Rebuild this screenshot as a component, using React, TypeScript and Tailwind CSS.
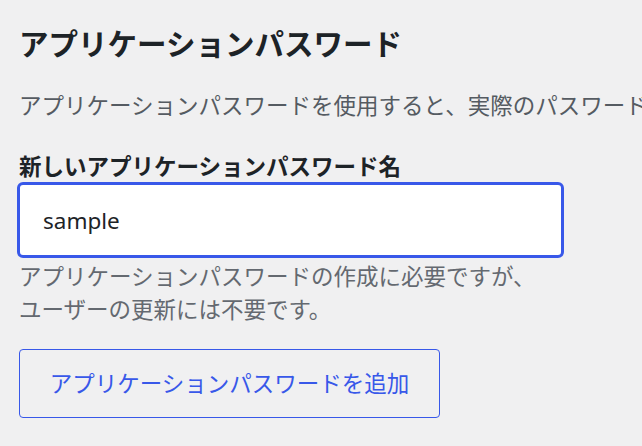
import React from 'react';

const font = { fontFamily: '"Noto Sans", "Noto Sans CJK JP", sans-serif' };

const App: React.FC = () => {
  return (
    <div
      className="w-[642px] h-[446px] overflow-hidden bg-[#f0f0f1] pl-[19px] pt-[26px] flex flex-col items-start"
      style={font}
    >
      <h2 className="text-[29.5px] leading-[36px] font-bold text-[#1d2327] whitespace-nowrap">
        アプリケーションパスワード
      </h2>
      <p className="mt-[28px] text-[22.5px] leading-[32px] text-[#555b62] whitespace-nowrap">
        アプリケーションパスワードを使用すると、実際のパスワードを入力することなく認証が可能になります。
      </p>
      <label className="mt-[30px] text-[22.5px] leading-[30px] font-bold text-[#1d2327] whitespace-nowrap">
        新しいアプリケーションパスワード名
      </label>
      <input
        type="text"
        defaultValue="sample"
        className="-ml-[2px] w-[547px] h-[76px] bg-white border-[3px] border-[#3858e9] rounded-[6px] pl-[23px] text-[22.5px] text-[#1d2327] outline-none"
        style={font}
      />
      <p className="mt-[2px] text-[22.5px] leading-[33px] text-[#646970]">
        アプリケーションパスワードの作成に必要ですが、
        <br />
        ユーザーの更新には不要です。
      </p>
      <button
        type="button"
        className="mt-[23px] w-[421px] h-[69px] border border-[#3858e9] rounded-[4px] text-[22.5px] text-[#3858e9] flex items-center justify-center whitespace-nowrap"
        style={font}
      >
        アプリケーションパスワードを追加
      </button>
    </div>
  );
};

export default App;
